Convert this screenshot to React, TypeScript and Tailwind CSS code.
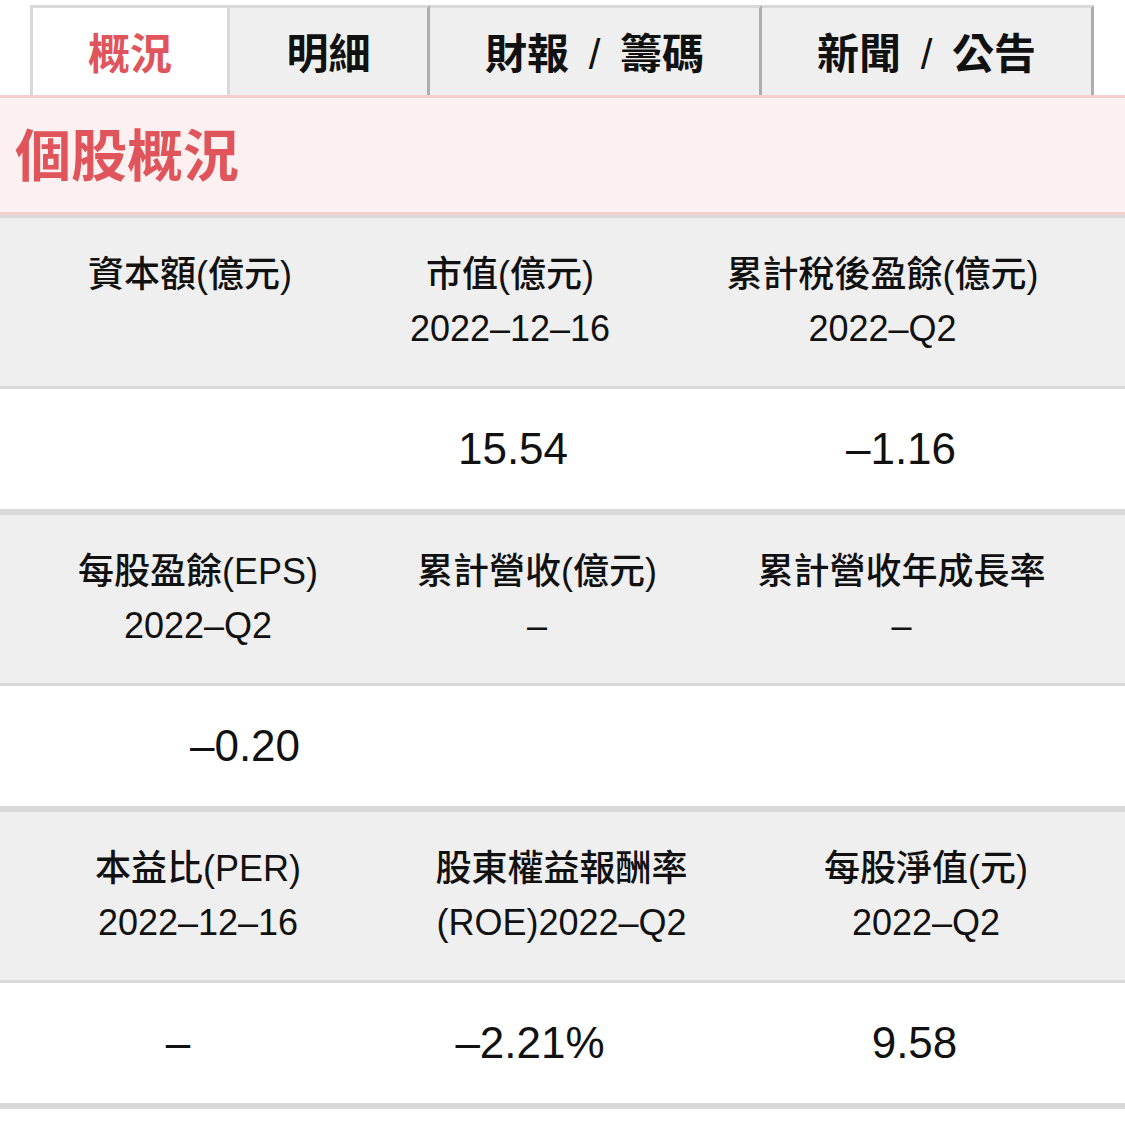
import React from "react";

const FONT = { fontFamily: '"Liberation Sans", "Noto Sans CJK TC", sans-serif' };

function LabelCell({ lines }: { lines: string[] }) {
  return (
    <div className="flex flex-col items-center py-[30px] text-[36px] leading-[54px] font-medium text-[#111] whitespace-nowrap">
      {lines.map((l, i) => (
        <div key={i}>{l}</div>
      ))}
    </div>
  );
}

function ValueCell({ v }: { v: string }) {
  return <div className="text-center text-[44px] leading-[54px] text-[#111] whitespace-nowrap">{v}</div>;
}

function Slash() {
  return <span className="font-normal mx-[8px]">/</span>;
}

export default function App() {
  return (
    <div className="w-[1125px] min-h-[1129px] bg-white" style={FONT}>
      {/* Tabs */}
      <div className="flex pl-[30px] pt-[5px]">
        <div className="w-[200px] h-[90px] pt-[5px] bg-white border-t-[3px] border-l-[3px] border-r-[3px] border-[#d9d9d9] flex items-center justify-center text-[42px] font-bold text-[#e0555b]">
          概況
        </div>
        <div className="w-[200px] h-[90px] pt-[5px] bg-[#efefef] border-t-[3px] border-t-[#d9d9d9] border-r-[3px] border-r-[#adadad] flex items-center justify-center text-[42px] font-bold text-[#111]">
          明細
        </div>
        <div className="w-[332px] h-[90px] pt-[5px] bg-[#efefef] border-t-[3px] border-t-[#d9d9d9] border-r-[3px] border-r-[#adadad] flex items-center justify-center text-[42px] font-bold text-[#111] whitespace-pre">
          財報 <Slash /> 籌碼
        </div>
        <div className="w-[332px] h-[90px] pt-[5px] bg-[#efefef] border-t-[3px] border-t-[#d9d9d9] border-r-[3px] border-r-[#adadad] flex items-center justify-center text-[42px] font-bold text-[#111] whitespace-pre">
          新聞 <Slash /> 公告
        </div>
      </div>

      {/* Header */}
      <div className="bg-[#fcf1f0] border-t-[3px] border-b-[3px] border-[#f4cfcf]">
        <div className="h-[114px] pt-[4px] pl-[15px] flex items-center text-[56px] leading-[56px] font-bold text-[#e0555b]">
          個股概況
        </div>
      </div>

      {/* Section 1 */}
      <div className="grid grid-cols-[380px_260px_485px] bg-[#efefef] border-t-[3px] border-b-[3px] border-[#d9d9d9] h-[174px]">
        <LabelCell lines={["資本額(億元)"]} />
        <LabelCell lines={["市值(億元)", "2022–12–16"]} />
        <LabelCell lines={["累計稅後盈餘(億元)", "2022–Q2"]} />
      </div>
      <div className="grid grid-cols-[349px_328px_448px] items-center h-[126px] bg-white border-b-[6px] border-[#d9d9d9]">
        <ValueCell v="" />
        <ValueCell v="15.54" />
        <ValueCell v="–1.16" />
      </div>

      {/* Section 2 */}
      <div className="grid grid-cols-[396px_282px_447px] bg-[#efefef] border-b-[3px] border-[#d9d9d9] h-[171px]">
        <LabelCell lines={["每股盈餘(EPS)", "2022–Q2"]} />
        <LabelCell lines={["累計營收(億元)", "–"]} />
        <LabelCell lines={["累計營收年成長率", "–"]} />
      </div>
      <div className="grid grid-cols-[490px_317px_318px] items-center h-[126px] bg-white border-b-[6px] border-[#d9d9d9]">
        <ValueCell v="–0.20" />
        <ValueCell v="" />
        <ValueCell v="" />
      </div>

      {/* Section 3 */}
      <div className="grid grid-cols-[396px_331px_398px] bg-[#efefef] border-b-[3px] border-[#d9d9d9] h-[171px]">
        <LabelCell lines={["本益比(PER)", "2022–12–16"]} />
        <LabelCell lines={["股東權益報酬率", "(ROE)2022–Q2"]} />
        <LabelCell lines={["每股淨值(元)", "2022–Q2"]} />
      </div>
      <div className="grid grid-cols-[356px_348px_421px] items-center h-[126px] bg-white border-b-[6px] border-[#d9d9d9]">
        <ValueCell v="–" />
        <ValueCell v="–2.21%" />
        <ValueCell v="9.58" />
      </div>
    </div>
  );
}
